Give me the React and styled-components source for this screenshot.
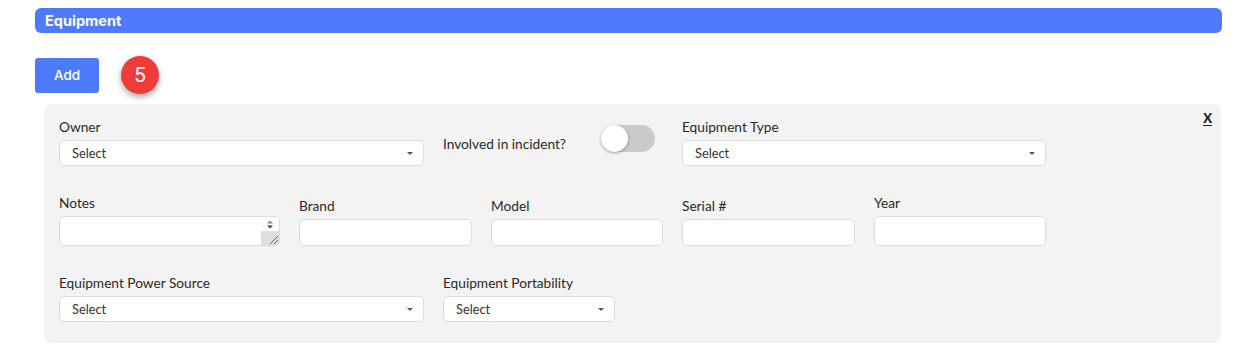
import React from "react";
import styled, { createGlobalStyle } from "styled-components";

const Global = createGlobalStyle`
  html, body { margin: 0; padding: 0; background: #ffffff; }
  body { font-family: Lato, "Open Sans", sans-serif; color: #333; }
  * { box-sizing: border-box; }
`;

const Page = styled.div`
  padding: 8px 33px 0 35px;
`;

const SectionHeader = styled.div`
  height: 25px;
  border-radius: 6px;
  background: #4e7bfd;
  color: #fff;
  font-family: Inter, sans-serif;
  font-weight: 700;
  font-size: 14.5px;
  display: flex;
  align-items: center;
  padding-left: 10px;
`;

const Toolbar = styled.div`
  margin-top: 23px;
  display: flex;
  align-items: center;
  gap: 22px;
`;

const AddButton = styled.button`
  width: 64px;
  height: 35px;
  border: none;
  border-radius: 3px;
  background: #4e7bfd;
  color: #fff;
  font-family: Inter, sans-serif;
  font-size: 13.5px;
  font-weight: 500;
  padding: 0;
`;

const StepBadge = styled.div`
  width: 38px;
  height: 38px;
  border-radius: 50%;
  background: #f03b3b;
  color: #fff;
  font-family: Roboto, sans-serif;
  font-size: 21px;
  display: flex;
  align-items: center;
  justify-content: center;
  box-shadow: 0 3px 6px rgba(0, 0, 0, 0.35);
`;

const Panel = styled.div`
  position: relative;
  margin: 10px 1px 0 9px;
  background: #f3f3f3;
  border-radius: 8px;
  padding: 15px 15px 21px 15px;
  display: flex;
  flex-direction: column;
  gap: 29px;
`;

const CloseLink = styled.a`
  position: absolute;
  top: 6px;
  right: 9px;
  font-family: Lato, sans-serif;
  font-weight: 900;
  font-size: 13px;
  color: #222;
  text-decoration: underline;
  text-underline-offset: 2px;
`;

const Row = styled.div`
  display: flex;
  gap: 19px;
  align-items: ${(p) => (p.$align === "end" ? "flex-end" : "stretch")};
`;

const Field = styled.div`
  width: ${(p) => p.$w}px;
  display: flex;
  flex-direction: column;
`;

const Label = styled.label`
  font-family: Lato, sans-serif;
  font-size: 13.7px;
  line-height: 16px;
  color: #2a2a2a;
  margin-bottom: 5px;
`;

const SelectBox = styled.div`
  height: 26px;
  background: #fff;
  border: 1px solid #dcdcdc;
  border-radius: 5px;
  display: flex;
  align-items: center;
  justify-content: space-between;
  padding: 0 10px 0 12px;
  font-family: Lato, sans-serif;
  font-size: 12.8px;
  color: #333;
`;

const Caret = styled.span`
  width: 0;
  height: 0;
  border-left: 3px solid transparent;
  border-right: 3px solid transparent;
  border-top: 3.5px solid #555;
`;

const TextInput = styled.input`
  height: ${(p) => p.$h}px;
  background: #fff;
  border: 1px solid #dcdcdc;
  border-radius: 5px;
  width: 100%;
  outline: none;
`;

const TextAreaWrap = styled.div`
  position: relative;
  height: 30px;
  background: #fff;
  border: 1px solid #dcdcdc;
  border-radius: 5px;
  overflow: hidden;
`;

const Scroll = styled.div`
  position: absolute;
  top: 0;
  right: 0;
  bottom: 0;
  width: 18px;
  display: flex;
  flex-direction: column;
`;

const ScrollArrows = styled.div`
  flex: 1;
  background: #fff;
  display: flex;
  justify-content: center;
  padding-top: 3px;
`;

const Resizer = styled.div`
  height: 14px;
  background: #dedede;
  display: flex;
  justify-content: flex-end;
  align-items: flex-end;
`;

const Inline = styled.div`
  width: ${(p) => p.$w}px;
  display: flex;
  align-items: flex-start;
`;

const InlineText = styled.span`
  font-family: Lato, sans-serif;
  font-size: 13.7px;
  line-height: 16px;
  color: #2a2a2a;
  margin-top: 17px;
`;

const Switch = styled.div`
  position: relative;
  margin-left: 35px;
  margin-top: 6px;
  width: 54px;
  height: 27px;
  border-radius: 14px;
  background: #cacaca;
`;

const Knob = styled.div`
  position: absolute;
  left: 0;
  top: 0;
  width: 27px;
  height: 27px;
  border-radius: 50%;
  background: #fff;
  box-shadow: 0 1px 3px rgba(0, 0, 0, 0.35);
`;

const Select = () => (
  <SelectBox>
    Select
    <Caret />
  </SelectBox>
);

export default function App() {
  return (
    <>
      <Global />
      <Page>
        <SectionHeader>Equipment</SectionHeader>
        <Toolbar>
          <AddButton>Add</AddButton>
          <StepBadge>5</StepBadge>
        </Toolbar>
        <Panel>
          <CloseLink>X</CloseLink>
          <Row>
            <Field $w={365}>
              <Label>Owner</Label>
              <Select />
            </Field>
            <Inline $w={220}>
              <InlineText>Involved in incident?</InlineText>
              <Switch>
                <Knob />
              </Switch>
            </Inline>
            <Field $w={364}>
              <Label>Equipment Type</Label>
              <Select />
            </Field>
          </Row>
          <Row $align="end">
            <Field $w={221}>
              <Label>Notes</Label>
              <TextAreaWrap>
                <Scroll>
                  <ScrollArrows>
                    <svg width="8" height="9" viewBox="0 0 8 9">
                      <path d="M1 3.5 L4 0.5 L7 3.5 Z" fill="#888" />
                      <path d="M1 5.5 L4 8.5 L7 5.5 Z" fill="#444" />
                    </svg>
                  </ScrollArrows>
                  <Resizer>
                    <svg width="12" height="12" viewBox="0 0 12 12">
                      <path d="M11 3 L3 11 M11 7 L7 11" stroke="#666" strokeWidth="1" />
                    </svg>
                  </Resizer>
                </Scroll>
              </TextAreaWrap>
            </Field>
            <Field $w={173}>
              <Label>Brand</Label>
              <TextInput $h={27} />
            </Field>
            <Field $w={172}>
              <Label>Model</Label>
              <TextInput $h={27} />
            </Field>
            <Field $w={173}>
              <Label>Serial #</Label>
              <TextInput $h={27} />
            </Field>
            <Field $w={172}>
              <Label>Year</Label>
              <TextInput $h={30} />
            </Field>
          </Row>
          <Row>
            <Field $w={365}>
              <Label>Equipment Power Source</Label>
              <Select />
            </Field>
            <Field $w={172}>
              <Label>Equipment Portability</Label>
              <Select />
            </Field>
          </Row>
        </Panel>
      </Page>
    </>
  );
}
